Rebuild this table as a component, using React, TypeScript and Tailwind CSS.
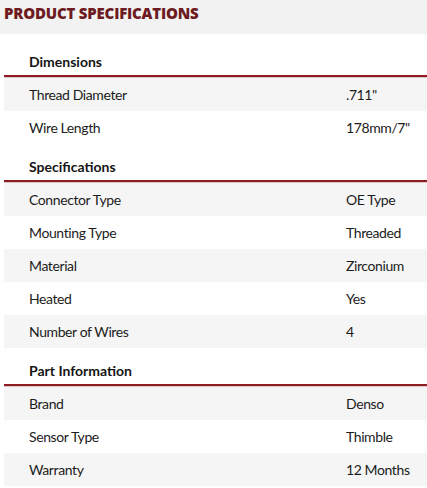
type Row = [string, string];

interface Section {
  title: string;
  rows: Row[];
}

const sections: Section[] = [
  {
    title: 'Dimensions',
    rows: [
      ['Thread Diameter', '.711"'],
      ['Wire Length', '178mm/7"'],
    ],
  },
  {
    title: 'Specifications',
    rows: [
      ['Connector Type', 'OE Type'],
      ['Mounting Type', 'Threaded'],
      ['Material', 'Zirconium'],
      ['Heated', 'Yes'],
      ['Number of Wires', '4'],
    ],
  },
  {
    title: 'Part Information',
    rows: [
      ['Brand', 'Denso'],
      ['Sensor Type', 'Thimble'],
      ['Warranty', '12 Months'],
    ],
  },
];

function SpecSection({ section, first }: { section: Section; first: boolean }) {
  return (
    <div className={first ? 'pt-[5px]' : ''}>
      <div className="h-[36px] flex items-end pb-[3px] pl-[25px] text-[14px] font-bold text-[#151515]">
        {section.title}
      </div>
      <div className="h-[2px] bg-[#8e1c22] shadow-[0_1px_1px_rgba(90,0,0,0.25)]" />
      <div className="pt-[1px]">
        {section.rows.map(([label, value], i) => (
          <div
            key={label}
            className={`h-[33px] grid grid-cols-[317px_1fr] items-center pl-[25px] text-[14px] tracking-[-0.4px] text-[#1c1c1c] ${
              i % 2 === 0 ? 'bg-[#f5f5f5]' : 'bg-white'
            }`}
          >
            <span>{label}</span>
            <span>{value}</span>
          </div>
        ))}
      </div>
    </div>
  );
}

export default function App() {
  return (
    <div
      className="w-[427px] h-[488px] bg-white overflow-hidden"
      style={{ fontFamily: 'Lato, "Open Sans", sans-serif' }}
    >
      <div className="h-[34px] bg-[#f2f2f2] flex items-center pl-1 pb-[7px]">
        <h2
          className="text-[15px] font-extrabold tracking-[-0.2px] text-[#6d1a20]"
          style={{ fontFamily: '"Open Sans", sans-serif' }}
        >
          PRODUCT SPECIFICATIONS
        </h2>
      </div>
      <div className="pl-1">
        {sections.map((s, i) => (
          <SpecSection key={s.title} section={s} first={i === 0} />
        ))}
      </div>
    </div>
  );
}
